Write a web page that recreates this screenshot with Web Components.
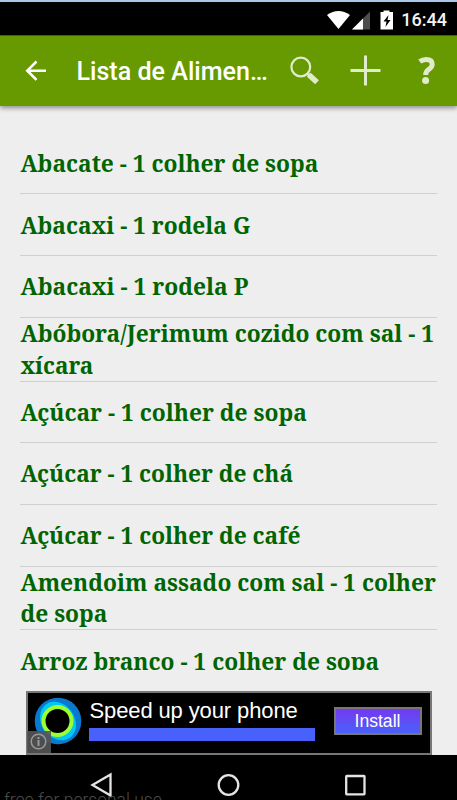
<!DOCTYPE html>
<html lang="pt-BR">
<head>
<meta charset="utf-8">
<title>Lista de Alimentos</title>
<style>
	html, body {
		margin: 0;
		height: 100%;
		background: #eee;
		overflow: hidden;
	}
</style>
</head>
<body>
<phone-screen>
	<status-bar slot="top">16:44</status-bar>
	<action-bar slot="top">Lista de Alimentos</action-bar>
	<food-list>
		<food-item width="298">Abacate - 1 colher de sopa</food-item>
		<food-item width="230">Abacaxi - 1 rodela G</food-item>
		<food-item width="228">Abacaxi - 1 rodela P</food-item>
		<food-item width="413.5" rest="xícara" rest-width="73">Abóbora/Jerimum cozido com sal - 1</food-item>
		<food-item width="286">Açúcar - 1 colher de sopa</food-item>
		<food-item width="273">Açúcar - 1 colher de chá</food-item>
		<food-item width="280">Açúcar - 1 colher de café</food-item>
		<food-item width="415.5" rest="de sopa" rest-width="87">Amendoim assado com sal - 1 colher</food-item>
		<food-item width="358.5">Arroz branco - 1 colher de sopa</food-item>
	</food-list>
	<ad-banner slot="bottom" action="Install">Speed up your phone</ad-banner>
	<nav-bar slot="bottom">free for personal use</nav-bar>
</phone-screen>

<script>
class PhoneScreen extends HTMLElement {

	constructor() {
		super();
		const shadowRoot = this.attachShadow({mode: 'open'});
		shadowRoot.innerHTML = `
			<style>
				:host {
					display: flex;
					flex-direction: column;
					width: 457px;
					height: 800px;
					overflow: hidden;
					background: #eee;
				}
			</style>
			<slot name="top"></slot>
			<slot></slot>
			<slot name="bottom"></slot>
		`;
	}
}

class StatusBar extends HTMLElement {

	constructor() {
		super();
		const shadowRoot = this.attachShadow({mode: 'open'});
		shadowRoot.innerHTML = `
			<style>
				:host {
					display: flex;
					flex: none;
					justify-content: flex-end;
					align-items: center;
					box-sizing: border-box;
					height: 35px;
					padding: 2px 10px 0 0;
					border-top: 2px solid #a9c8ea;
					background: #000;
					color: #f4f4f4;
					font: 500 18px/20px Roboto, sans-serif;
				}
				svg {
					width: 68px;
					height: 20px;
					margin-right: 7px;
				}
				span {
					padding-top: 1px;
				}
			</style>
			<svg viewBox="326 9 68 20">
				<path d="M327 14q11.500-8 23 0L338.500 28z" fill="#fff"/>
				<path d="M352 28.500L370 10.500v18z" fill="#4d4d4d"/>
				<path d="M352 28.500l11-11v11z" fill="#fff"/>
				<path d="M380.500 11h3V9.500h6V11h3.500v17.500h-12.500z" fill="#fff"/>
				<path d="M388.500 14l-5 6.500h3l-1 5.500 5-7h-3z" fill="#000"/>
			</svg>
			<span><slot></slot></span>
		`;
	}
}

class ActionBar extends HTMLElement {

	constructor() {
		super();
		const shadowRoot = this.attachShadow({mode: 'open'});
		shadowRoot.innerHTML = `
			<style>
				:host {
					display: flex;
					flex: none;
					align-items: center;
					box-sizing: border-box;
					height: 71px;
					border-top: 1px solid #426500;
					padding: 0 20px 0 25px;
					background: #669a00;
					box-shadow: 0 2px 5px rgba(0, 0, 0, .42);
					z-index: 1;
				}
				.back {
					width: 22px;
					height: 22px;
					margin-right: 29.500px;
				}
				.title {
					width: 196px;
					margin-right: 16.500px;
					padding-top: 2px;
					overflow: hidden;
					text-overflow: ellipsis;
					white-space: nowrap;
					color: #fff;
					font: 500 25.1px/32px Roboto, sans-serif;
				}
				.tools {
					width: 148px;
					height: 34px;
				}
			</style>
			<svg class="back" viewBox="25 60 22 22" fill="none" stroke="#fff" stroke-width="2.600">
				<path d="M46 70.700H27.500M36.500 61.500L27.300 70.700l9.200 9.200"/>
			</svg>
			<div class="title"><slot></slot></div>
			<svg class="tools" viewBox="289 54 148 34" fill="none" stroke="#e0ebcc">
				<circle cx="300.800" cy="67" r="9.400" stroke-width="2.200"/>
				<path d="M307 73l3 3" stroke-width="3"/>
				<path d="M308.800 74.800l8.200 7.500" stroke-width="5.600"/>
				<path d="M350.500 70.500h30M365.500 55.500v30" stroke-width="3"/>
				<path d="M419.700 61.600q3-2.200 6.300-2.200 6.200 0 6.200 4.800 0 3-3.700 5.400-2.800 1.800-2.800 5.400" stroke-width="5"/>
				<circle cx="425.600" cy="80.600" r="3.500" fill="#e0ebcc" stroke="none"/>
			</svg>
		`;
	}
}

class FoodList extends HTMLElement {

	constructor() {
		super();
		const shadowRoot = this.attachShadow({mode: 'open'});
		shadowRoot.innerHTML = `
			<style>
				:host {
					display: block;
					flex: none;
					box-sizing: border-box;
					height: 564px;
					padding: 26.8px 20px 0;
					overflow: hidden;
				}
			</style>
			<slot></slot>
		`;
	}
}

class FoodItem extends HTMLElement {

	constructor() {
		super();
		const shadowRoot = this.attachShadow({mode: 'open'});
		shadowRoot.innerHTML = `
			<style>
				:host {
					display: flex;
					flex-direction: column;
					justify-content: center;
					box-sizing: border-box;
					min-height: 61.7px;
					padding-top: .6px;
					border-bottom: 1px solid #cfcfcf;
					color: #006400;
					font: bold 23.5px/31.1px "Noto Serif", "Droid Serif", "DejaVu Serif Condensed", "DejaVu Serif", serif;
					white-space: nowrap;
				}
				span {
					align-self: flex-start;
					transform-origin: 0 50%;
				}
			</style>
			<span id="first"><slot></slot></span>
		`;
	}

	connectedCallback() {
		var first = this.shadowRoot.querySelector("#first");
		this.fit(first, this.getAttribute("width"));
		if (this.hasAttribute("rest")) {
			var rest = document.createElement("span");
			rest.textContent = this.getAttribute("rest");
			this.shadowRoot.appendChild(rest);
			this.fit(rest, this.getAttribute("rest-width"));
		}
	}

	// Squeeze a line to its given width, whichever serif is present
	fit(line, width) {
		line.style.transform = `translateX(.5px) scaleX(${width / line.offsetWidth})`;
	}
}

class AdBanner extends HTMLElement {

	constructor() {
		super();
		const shadowRoot = this.attachShadow({mode: 'open'});
		shadowRoot.innerHTML = `
			<style>
				:host {
					display: flex;
					flex: none;
					position: relative;
					box-sizing: border-box;
					width: 406px;
					height: 64px;
					margin: 21px 0 0 25.500px;
					padding: 4px 8px 0 6.500px;
					border: 2px solid #777;
					background: #000;
					color: #fff;
					font: 22px/28px "Liberation Sans", sans-serif;
				}
				.logo {
					width: 48px;
					height: 48px;
					margin-right: 6.500px;
				}
				.copy {
					width: 226px;
					white-space: nowrap;
				}
				.text {
					height: 31px;
					padding-left: 1px;
					letter-spacing: -.12px;
				}
				.bar {
					height: 13px;
					background: #4961fb;
				}
				.install {
					box-sizing: border-box;
					width: 88px;
					height: 28px;
					margin: 10px 0 0 auto;
					border: 2px solid #777;
					background: linear-gradient(#7539ef, #4961fb);
					text-align: center;
					font-size: 17.6px;
					line-height: 25px;
				}
				.info {
					position: absolute;
					left: -1px;
					bottom: 0;
					width: 25px;
					height: 22px;
				}
			</style>
			<svg class="logo" viewBox="0 0 48 48">
				<circle cx="24" cy="24" r="23.300" fill="#0879cf"/>
				<ellipse cx="24" cy="24" rx="16.500" ry="20.500" transform="rotate(-35 24 24)" fill="#00c8f4"/>
				<circle cx="23.500" cy="24" r="14" fill="#000" stroke="#9bff32" stroke-width="4"/>
			</svg>
			<div class="copy">
				<div class="text"><slot></slot></div>
				<div class="bar"></div>
			</div>
			<div class="install"></div>
			<svg class="info" viewBox="0 0 25 22">
				<path d="M0 0h24v22H0z" fill="#555" fill-opacity=".9"/>
				<circle cx="11.500" cy="10.500" r="7.300" fill="none" stroke="#999" stroke-width="1.500"/>
				<path d="M11.500 9v6M11.500 6v2" stroke="#999" stroke-width="2"/>
			</svg>
		`;
	}

	connectedCallback() {
		this.shadowRoot.querySelector(".install").textContent = this.getAttribute("action");
	}
}

class NavBar extends HTMLElement {

	constructor() {
		super();
		const shadowRoot = this.attachShadow({mode: 'open'});
		shadowRoot.innerHTML = `
			<style>
				:host {
					display: flex;
					flex: none;
					position: relative;
					height: 45px;
					background: #000;
				}
				svg {
					width: 457px;
					height: 45px;
				}
				.mark {
					position: absolute;
					left: 4px;
					top: 35px;
					color: #4c4c4c;
					font: 300 17.5px/20px Roboto, sans-serif;
					white-space: nowrap;
				}
			</style>
			<span class="mark"><slot></slot></span>
			<svg viewBox="0 755 457 45" fill="none" stroke="#e4e4e4" stroke-width="2.300">
				<path d="M110.500 774.500v21L92.500 785z"/>
				<circle cx="228.500" cy="785" r="9.800"/>
				<rect x="346.200" y="776" width="18.300" height="18.300" rx=".5"/>
			</svg>
		`;
	}
}

window.customElements.define('phone-screen', PhoneScreen);
window.customElements.define('status-bar', StatusBar);
window.customElements.define('action-bar', ActionBar);
window.customElements.define('food-list', FoodList);
window.customElements.define('food-item', FoodItem);
window.customElements.define('ad-banner', AdBanner);
window.customElements.define('nav-bar', NavBar);
</script>
</body>
</html>
